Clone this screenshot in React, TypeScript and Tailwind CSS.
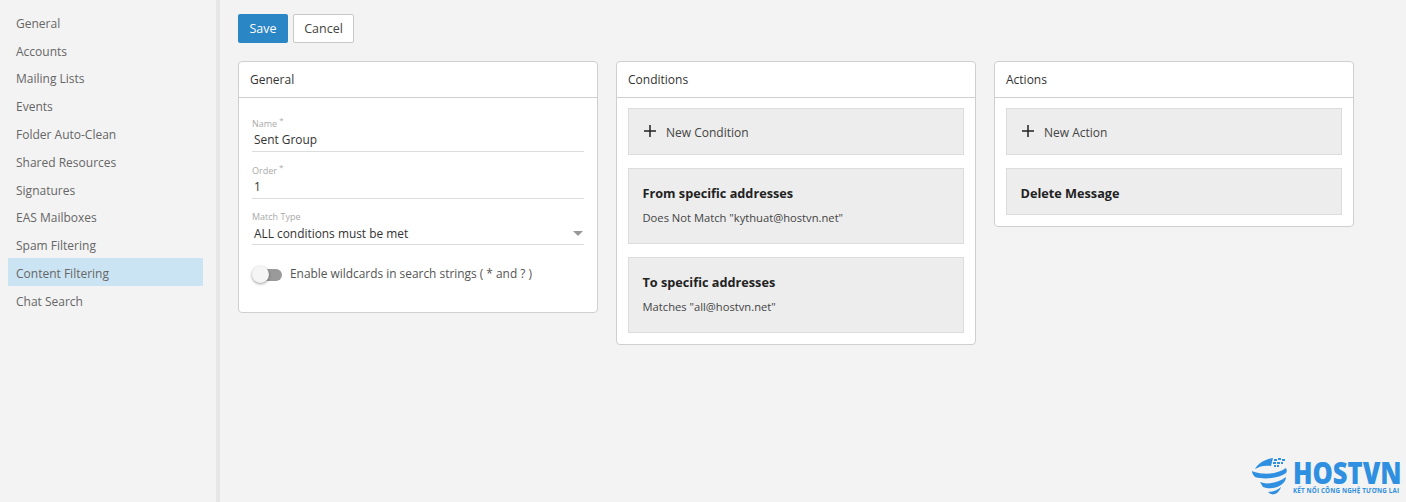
const navItems = [
  'General',
  'Accounts',
  'Mailing Lists',
  'Events',
  'Folder Auto-Clean',
  'Shared Resources',
  'Signatures',
  'EAS Mailboxes',
  'Spam Filtering',
  'Content Filtering',
  'Chat Search',
];

function Card({ title, children }: { title: string; children: React.ReactNode }) {
  return (
    <div className="w-[360px] rounded-[4px] border border-[#cfcfcf] bg-white">
      <div className="flex h-[36px] items-center border-b border-[#cfcfcf] px-[11px] text-[12px] text-[#333]">{title}</div>
      {children}
    </div>
  );
}

function Field({ label, required, value, arrow }: { label: string; required?: boolean; value: string; arrow?: boolean }) {
  return (
    <div className={`flex flex-col border-b border-[#dcdcdc] ${arrow ? 'h-[46px]' : 'h-[47px]'}`}>
      <div className={`h-[13px] text-[9px] leading-[14px] text-[#aaa] ${arrow ? 'mt-[11px]' : 'mt-[12px]'}`}>
        {label}
        {required && <sup className="ml-[2px] text-[8px]">*</sup>}
      </div>
      <div className={`flex items-center justify-between pl-[2px] text-[11.9px] text-[#333] ${arrow ? 'h-[21px]' : 'h-[19px]'}`}>
        {value}
        {arrow && <span className="mr-[1px] h-0 w-0 border-x-[5px] border-t-[5px] border-x-transparent border-t-[#999]" />}
      </div>
    </div>
  );
}

function NewTile({ label }: { label: string }) {
  return (
    <div className="flex h-[47px] items-center gap-[9px] border border-[#dcdcdc] bg-[#ededed] pl-[14px] text-[12px] text-[#444]">
      <svg width="14" height="14" viewBox="0 0 14 14" stroke="#222" strokeWidth="1.5" className="mt-[-1px]">
        <path d="M7 1v12M1 7h12" />
      </svg>
      <span className="pt-[2px]">{label}</span>
    </div>
  );
}

function RuleTile({ title, detail }: { title: string; detail?: string }) {
  return (
    <div className={`border border-[#dcdcdc] bg-[#ededed] px-[13.5px] pt-[14px] ${detail ? 'h-[76px]' : 'h-[47px]'}`}>
      <div className="text-[12.7px] leading-[20px] font-bold text-[#222]">{title}</div>
      {detail && <div className="mt-[6px] text-[11.2px] leading-[18px] text-[#444]">{detail}</div>}
    </div>
  );
}

function Logo() {
  return (
    <div className="flex items-start gap-[6px]">
      <svg width="36" height="40" viewBox="0 0 36 40" fill="#2f8fe0">
        <path d="M4 13C7 7 14 3 22 2L20 10C14 9 9 10 4 13z" />
        <path d="M23 3h3v2h-3zM27 2h3v2h-3zM31 3h3v2h-3zM22 6h3v2h-3zM26 6h3v2h-3zM30 6h2v2h-2zM23 9h2v2h-2zM26 9h2v2h-2z" />
        <path d="M1 15C7 18 24 20 35 12C36 14 36 16 35 17C28 22 14 24 4 21C2 19 1 17 1 15z" />
        <path d="M9 26C16 29 27 27 35 21C35 24 33 27 30 29C24 33 17 33 12 31C11 29 10 28 9 26z" />
        <path d="M17 36C22 36 27 34 30 31C29 34 27 37 24 38C21 39 19 38 17 36z" />
      </svg>
      <div className="flex flex-col pt-[4px]">
        <div className="h-[22px] origin-top scale-y-[1.16] text-[25.5px] leading-[22px] font-extrabold text-[#2f8fe0]">HOSTVN</div>
        <div className="mt-[3.5px] h-[7px] origin-top scale-y-[1.2] text-[6.2px] leading-[7px] font-bold tracking-[0.2px] whitespace-nowrap text-[#2f8fe0]">KẾT NỐI CÔNG NGHỆ TƯƠNG LAI</div>
      </div>
    </div>
  );
}

export default function App() {
  return (
    <div className="relative flex h-[502px] w-[1406px] overflow-hidden bg-[#f3f3f3] font-['Open_Sans',sans-serif]">
      {/* Sidebar */}
      <div className="w-[220px] shrink-0 border-r-[4px] border-[#e6e6e6] pt-[8px] pl-[8px]">
        {navItems.map((item) => (
          <div
            key={item}
            className={`flex h-[27.8px] w-[195px] items-center pt-[4px] pl-[8px] text-[12px] text-[#666] ${
              item === 'Content Filtering' ? 'bg-[#cbe4f3]' : ''
            }`}
          >
            {item}
          </div>
        ))}
      </div>

      {/* Main */}
      <div className="flex-1 pt-[14px] pl-[18px]">
        <div className="flex gap-[5px]">
          <button className="h-[29px] w-[50px] rounded-[2px] bg-[#2b86c5] pt-[1px] text-[12.5px] text-white">Save</button>
          <button className="h-[29px] w-[61px] rounded-[2px] border border-[#c8c8c8] bg-white pt-[1px] text-[12.5px] text-[#444]">Cancel</button>
        </div>

        <div className="mt-[18px] flex items-start gap-[18px]">
          <Card title="General">
            <div className="h-[214px] px-[13px] pt-[7px]">
              <Field label="Name" required value="Sent Group" />
              <Field label="Order" required value="1" />
              <Field label="Match Type" value="ALL conditions must be met" arrow />
              <div className="mt-[20px] flex items-center gap-[8px]">
                <div className="relative h-[10px] w-[30px] rounded-full">
                  <div className="absolute top-0 right-0 h-[12px] w-[24px] rounded-full bg-[#9a9a9a]" />
                  <div className="absolute top-[-3px] left-0 h-[17px] w-[17px] rounded-full bg-[#f5f5f5] shadow-[0_1px_3px_rgba(0,0,0,0.4)]" />
                </div>
                <span className="text-[11.9px] text-[#555]">Enable wildcards in search strings ( * and ? )</span>
              </div>
            </div>
          </Card>

          <Card title="Conditions">
            <div className="flex flex-col gap-[13px] px-[11px] pt-[10px] pb-[11px]">
              <NewTile label="New Condition" />
              <RuleTile title="From specific addresses" detail={'Does Not Match "kythuat@hostvn.net"'} />
              <RuleTile title="To specific addresses" detail={'Matches "all@hostvn.net"'} />
            </div>
          </Card>

          <Card title="Actions">
            <div className="flex flex-col gap-[13px] px-[11px] pt-[10px] pb-[11px]">
              <NewTile label="New Action" />
              <RuleTile title="Delete Message" />
            </div>
          </Card>
        </div>
      </div>

      {/* Watermark logo */}
      <div className="absolute top-[456px] left-[1251px]">
        <Logo />
      </div>
    </div>
  );
}
